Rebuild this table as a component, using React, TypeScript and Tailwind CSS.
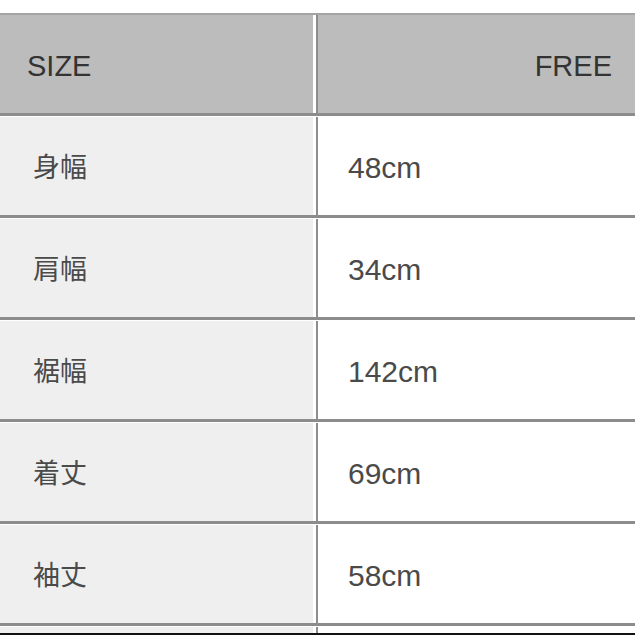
import React from "react";

const rows = [
  ["身幅", "48cm"],
  ["肩幅", "34cm"],
  ["裾幅", "142cm"],
  ["着丈", "69cm"],
  ["袖丈", "58cm"],
];

const font = { fontFamily: '"Liberation Sans", Arial, "Noto Sans CJK JP", sans-serif' };

export default function App() {
  return (
    <div className="w-[635px] h-[635px] overflow-hidden bg-white flex flex-col pt-[13px]" style={font}>
      <div className="border-t-2 border-[#a4a4a4] flex h-[100px] shrink-0">
        <div className="w-[313px] bg-[#bcbcbc] flex items-center pl-[27px] pt-[6px] text-[29px] text-[#333]">SIZE</div>
        <div className="w-[3px] bg-white"></div>
        <div className="flex-1 bg-[#bcbcbc] border-l-2 border-[#8e8e8e] flex items-center justify-end pr-[23px] pt-[6px] text-[29px] text-[#333]">FREE</div>
      </div>
      {rows.map(([k, v]) => (
        <div key={k} className="border-t-[3px] border-[#8c8c8c] pt-px flex flex-col shrink-0">
          <div className="flex h-[98px]">
            <div className="w-[313px] bg-[#efefef] flex items-center pl-[33px] pt-[5px] text-[27px] text-[#4a4a4a]">{k}</div>
            <div className="w-[3px] bg-white"></div>
            <div className="flex-1 bg-white border-l-2 border-[#8e8e8e] flex items-center pl-[30px] pt-[2px] text-[30px] text-[#4a4a4a]">{v}</div>
          </div>
        </div>
      ))}
      <div className="border-t-[3px] border-[#8c8c8c] pt-px flex flex-col flex-1">
        <div className="flex flex-1">
          <div className="w-[313px] bg-[#efefef]"></div>
          <div className="w-[3px] bg-white"></div>
          <div className="flex-1 bg-white border-l-2 border-[#8e8e8e]"></div>
        </div>
        <div className="h-[2px] bg-[#111] shrink-0"></div>
      </div>
    </div>
  );
}
